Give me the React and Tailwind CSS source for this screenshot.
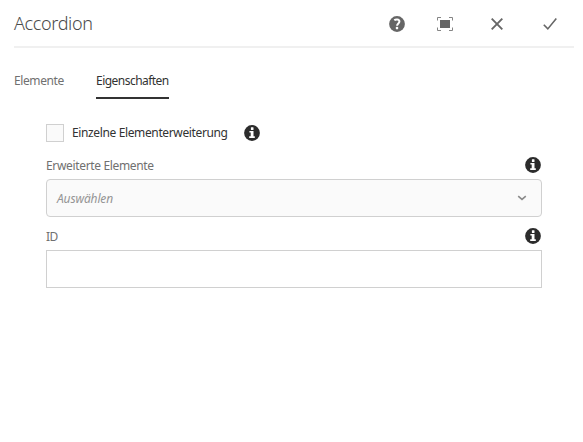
function InfoIcon() {
  return (
    <svg className="block size-4 shrink-0" viewBox="0 0 16 16">
      <circle cx="8" cy="8" r="7.9" fill="#2c2c2c" />
      <rect x="6.9" y="2.3" width="2.6" height="2.6" rx="0.5" fill="#fff" />
      <path d="M5.4 6h4.1v5.200h1.300v1.700H5.200v-1.700h1.500V7.600H5.400z" fill="#fff" />
    </svg>
  );
}

function HelpIcon() {
  return (
    <svg className="block size-4" viewBox="0 0 16 16">
      <circle cx="8" cy="8" r="7.9" fill="#666" />
      <path
        d="M5.3 4.2C6.3 3.3 10.4 2.7 10.4 5.6C10.4 7.4 8.1 7.6 8.1 9.8"
        fill="none"
        stroke="#fff"
        strokeWidth="2"
      />
      <circle cx="8" cy="12.1" r="1.300" fill="#fff" />
    </svg>
  );
}

function FullscreenIcon() {
  return (
    <svg className="block h-4 w-[18px]" viewBox="0 0 18 16">
      <rect x="4" y="4" width="10" height="8" fill="#666" />
      <path
        d="M1.5 4.500V1.5H5M13 1.5h3.5v3M16.500 11.500v3H13M5 14.500H1.500v-3"
        fill="none"
        stroke="#858585"
        strokeWidth="1"
      />
    </svg>
  );
}

function CloseIcon() {
  return (
    <svg className="block size-4" viewBox="0 0 16 16">
      <path d="M2.700 2.700l10.600 10.600M13.300 2.700L2.700 13.300" stroke="#666" strokeWidth="1.900" />
    </svg>
  );
}

function CheckIcon() {
  return (
    <svg className="block size-4" viewBox="0 0 16 16">
      <path d="M1.800 8.700l4 4.200L14.300 2.500" fill="none" stroke="#666" strokeWidth="1.600" />
    </svg>
  );
}

export default function App() {
  return (
    <main className="h-[442px] w-[583px] overflow-hidden bg-white pr-[9px] pl-[14px] font-['Noto_Sans',sans-serif] text-[12px] leading-4 text-[#707070]">
      <header className="flex h-12 items-center justify-between border-b-2 border-[#f0f0f0] pr-4">
        <h1 className="text-[18px] leading-6 font-light tracking-[-0.35px] text-[#4b4b4b]">Accordion</h1>
        <div className="flex items-center pt-0.5">
          <button className="mr-[31px]"><HelpIcon /></button>
          <button className="mr-[35px]"><FullscreenIcon /></button>
          <button className="mr-[37px]"><CloseIcon /></button>
          <button><CheckIcon /></button>
        </div>
      </header>
      <nav className="mt-[25px] flex h-[26px] gap-8 whitespace-nowrap">
        <button className="flex w-[50px] items-start tracking-[-0.4px]">Elemente</button>
        <button className="flex w-[73px] items-start border-b-2 border-[#323232] tracking-[-0.53px] text-[#323232]">
          Eigenschaften
        </button>
      </nav>
      <form className="ml-8 w-[496px] pt-[25px]">
        <div className="flex h-[18px] items-center">
          <span className="size-[18px] border border-[#d0d0d0] bg-[#fafafa]" />
          <label className="ml-2 w-[172px] whitespace-nowrap tracking-[-0.37px] text-[#323232]">
            Einzelne Elementerweiterung
          </label>
          <InfoIcon />
        </div>
        <div className="mt-[15px] flex h-[22px] items-start justify-between pr-px">
          <label className="pt-px tracking-[-0.34px]">Erweiterte Elemente</label>
          <InfoIcon />
        </div>
        <div className="flex h-[38px] items-center justify-between rounded-[4px] border border-[#d0d0d0] bg-[#fafafa] pr-[14px] pl-[10px]">
          <span className="pt-px tracking-[-0.15px] text-[#959595] italic">Auswählen</span>
          <svg className="h-[6px] w-[10px]" viewBox="0 0 10 6">
            <path d="M1.200 1.200L5 4.400l3.800-3.200" fill="none" stroke="#8a8a8a" strokeWidth="1.600" />
          </svg>
        </div>
        <div className="mt-[11px] flex h-[22px] items-start justify-between pr-px">
          <label className="pt-px tracking-[-0.6px]">ID</label>
          <InfoIcon />
        </div>
        <input className="block h-[38px] w-full border border-[#d0d0d0] bg-white px-2.5 outline-none" />
      </form>
    </main>
  );
}
